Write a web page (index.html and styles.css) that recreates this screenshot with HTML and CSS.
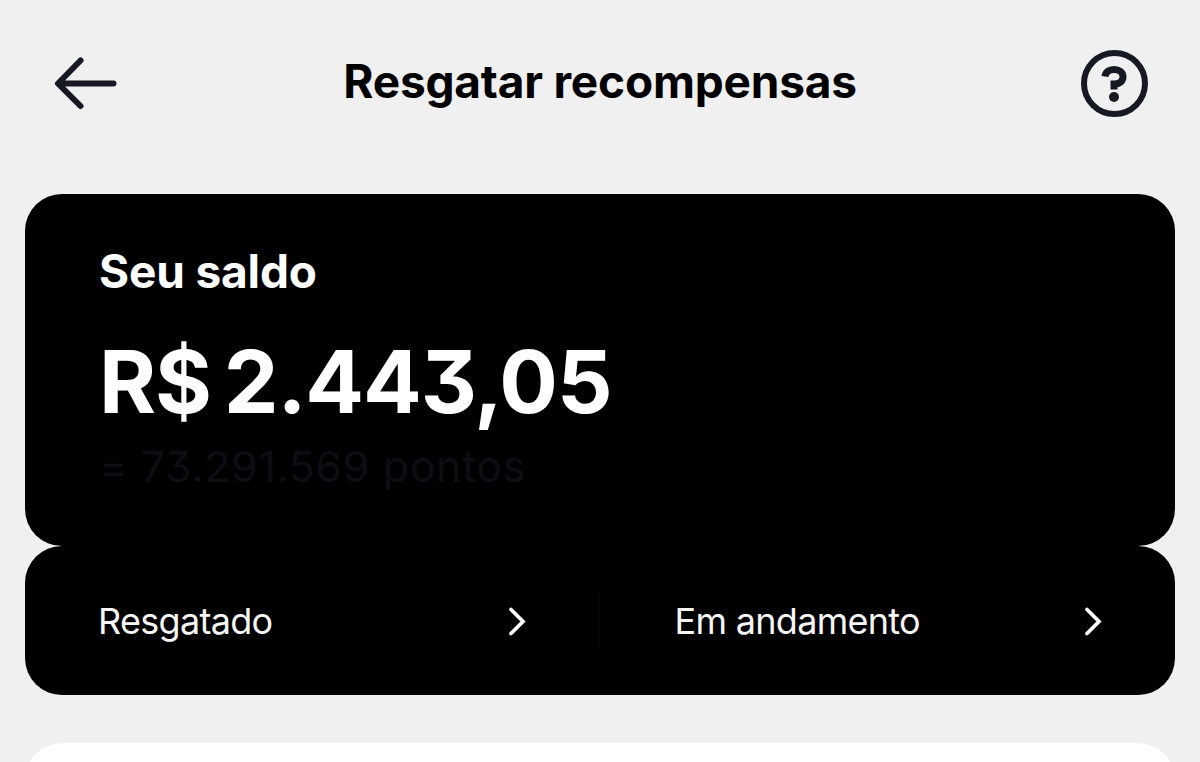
FILE: index.html
```html
<!DOCTYPE html>
<html lang="pt-BR">

<head>
    <meta charset="UTF-8">
    <meta name="viewport" content="width=device-width, initial-scale=1.0">
    <title>Resgatar recompensas</title>
    <link rel="stylesheet" href="styles.css">
</head>

<body>

    <header class="top-bar">
        <button class="icon-button" aria-label="Voltar">
            <svg width="68" height="68" viewBox="0 0 68 68" fill="none" stroke="#161823" stroke-width="6" stroke-linecap="round" stroke-linejoin="round">
                <path d="M29.500 10.500 7 33.500 29.500 56M8 33.500h54.500" />
            </svg>
        </button>
        <h1 class="title">Resgatar recompensas</h1>
        <button class="icon-button" aria-label="Ajuda">
            <svg width="68" height="68" viewBox="0 0 68 68" fill="none" stroke="#161823">
                <circle cx="34.500" cy="33.500" r="30.500" stroke-width="6" />
                <path d="M25 26.500C25.500 22 29 19.500 34 19.500c5.500 0 9 2.800 9 7.300 0 4.700-3.500 7.200-9 7.200v5.500" stroke-width="7" />
                <circle cx="34" cy="47" r="5" fill="#161823" stroke="none" />
            </svg>
        </button>
    </header>

    <main class="content">
        <section class="card balance">
            <h2 class="balance-label">Seu saldo</h2>
            <p class="balance-amount"><span class="currency">R$</span><span class="value">2.443,05</span></p>
            <p class="balance-points">= 73.291.569 pontos</p>
        </section>

        <nav class="card links">
            <a class="link" href="#">
                <span class="redeemed">Resgatado</span>
                <svg width="18" height="30" viewBox="0 0 18 30" fill="none" stroke="#fff" stroke-width="3.700" stroke-linecap="round">
                    <path d="M3 3.500 15 15.500 3 27.500" />
                </svg>
            </a>
            <a class="link" href="#">
                <span class="pending">Em andamento</span>
                <svg width="18" height="30" viewBox="0 0 18 30" fill="none" stroke="#fff" stroke-width="3.700" stroke-linecap="round">
                    <path d="M3 3.500 15 15.500 3 27.500" />
                </svg>
            </a>
        </nav>

        <section class="card next"></section>
    </main>

</body>

</html>
```

FILE: styles.css
```css
*,
*::before,
*::after {
    box-sizing: border-box;
    margin: 0;
    padding: 0;
}

body {
    background: #f0f0f0;
    color: #000;
    display: flex;
    flex-direction: column;
    font-family: Inter, 'Liberation Sans', sans-serif;
    height: 762px;
}

.top-bar {
    align-items: center;
    display: flex;
    height: 194px;
    justify-content: space-between;
    padding: 0 52px 27px 51px;
}

.icon-button {
    background: none;
    border: 0;
    height: 68px;
    width: 68px;
}

.icon-button svg {
    display: block;
}

.title {
    font-size: 46px;
    font-weight: 700;
    letter-spacing: -0.2px;
    line-height: 60px;
    padding: 0 0 6px 1px;
    white-space: nowrap;
}

.content {
    height: 568px;
    overflow: hidden;
    padding: 0 25px;
}

.card {
    background: #000;
    border-radius: 37px;
    color: #fff;
}

.balance {
    height: 351.5px;
    padding: 47px 74px 0;
}

.balance-label {
    font-size: 46px;
    font-weight: 700;
    letter-spacing: -0.15px;
    line-height: 60px;
}

.balance-amount {
    display: flex;
    font-size: 87px;
    font-feature-settings: 'cv09';
    font-weight: 700;
    gap: 13px;
    letter-spacing: -1.15px;
    line-height: 100px;
    margin-top: 31px;
}

.balance-points {
    color: #0d0d14;
    font-size: 43px;
    font-feature-settings: 'cv09';
    letter-spacing: 0.6px;
    line-height: 60px;
    margin-top: 4px;
}

.links {
    display: flex;
    height: 149px;
}

.link {
    align-items: center;
    color: #f6f6f6;
    display: flex;
    flex: 1;
    font-size: 36px;
    justify-content: space-between;
    letter-spacing: -0.7px;
    line-height: 48px;
    padding: 2px 73px 0 73px;
    position: relative;
    text-decoration: none;
}

.link + .link {
    padding-left: 76px;
}

.link + .link::before {
    background: #050505;
    content: '';
    height: 58px;
    left: 0;
    position: absolute;
    width: 1px;
}

.next {
    background: #fff;
    height: 80px;
    margin-top: 48px;
}
```
